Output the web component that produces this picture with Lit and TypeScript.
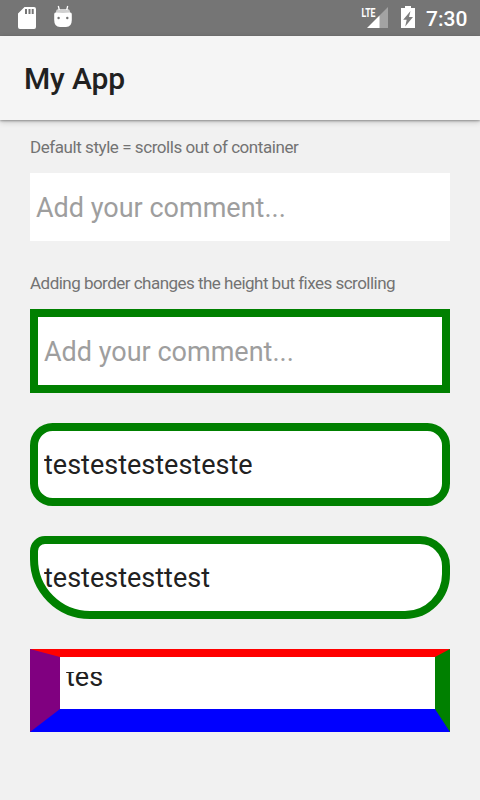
import { LitElement, html, css } from "lit";
import { customElement, property } from "lit/decorators.js";

@customElement("status-bar")
class StatusBar extends LitElement {
  static styles = css`
    :host { display: flex; align-items: center; height: 36px; background: #757575; color: #fff; box-sizing: border-box; }
    svg { display: block; flex: none; }
    .spacer { flex: 1; }
    .clock { width: 54px; box-sizing: border-box; padding-top: 2px; font: 500 21px/34px Roboto, sans-serif; }
    .lte { font: 700 13.5px Roboto, sans-serif; fill: #fff; }
  `;
  render() {
    return html`
      <svg width="84" height="36" viewBox="0 0 84 36">
        <path fill="#fff" fill-rule="evenodd" d="M24.5 7H34a2 2 0 0 1 2 2v18a2 2 0 0 1-2 2H20a2 2 0 0 1-2-2V13.500zM25 9v5h2v-5zM28.500 9v5h2v-5zM31.700 9v5h2v-5z"/>
        <path fill="#d0d0d0" d="M56 12q0-3 3-3h8q3 0 3 3v2H56z"/>
        <path d="M58.300 6l1 4M67.700 6l-1 4" stroke="#fff" stroke-width="1.300" fill="none"/>
        <path fill="#fff" d="M55.500 12.500q7.500 .8 15 0q1.300 0 1.300 2V20q0 7-5.800 7h-6q-5.800 0-5.800-7v-5.500q0-2 1.300-2z"/>
        <circle cx="58.600" cy="18" r="1.200" fill="#757575"/>
        <circle cx="67.300" cy="18" r="1.200" fill="#757575"/>
      </svg>
      <div class="spacer"></div>
      <svg width="66" height="36" viewBox="360 0 66 36">
        <path fill="#a3a3a3" d="M388 7v21h-9V16z"/>
        <path fill="#fff" d="M379.500 15.500V28H367z"/>
        <text class="lte" x="361.500" y="17" textLength="14" lengthAdjust="spacingAndGlyphs">LTE</text>
        <path fill="#fff" d="M405 6h6v2h4v20h-14V8h4z"/>
        <path fill="#7d7d7d" d="M410.500 11l-7.300 8.700h3.500l-1.500 6.800l7.800-9.500h-4z"/>
      </svg>
      <div class="clock">7:30</div>
    `;
  }
}

@customElement("comment-field")
class CommentField extends LitElement {
  @property() text = "";
  static styles = css`
    :host { display: block; box-sizing: border-box; background: #fff; overflow: hidden; font: 27px/32px Roboto, sans-serif; color: #212121; }
    .value { padding: var(--field-pad, 19px) 0 0 6px; white-space: nowrap; }
    .clip { overflow: hidden; height: var(--clip-height, auto); }
    .line { margin-top: var(--line-shift, 0); }
  `;
  render() {
    return html`<div class="value"><div class="clip"><div class="line">${this.text}</div></div></div>`;
  }
}

@customElement("app-root")
class AppRoot extends LitElement {
  static styles = css`
    :host { display: flex; flex-direction: column; height: 800px; background: #f1f1f1; font-family: Roboto, sans-serif; overflow: hidden; }
    .toolbar { height: 84px; background: #f5f5f5; box-shadow: 0 1px 2px rgba(0,0,0,.32), 0 2px 6px rgba(0,0,0,.18); padding-left: 24px; font-size: 30px; font-weight: 500; line-height: 85px; color: #212121; letter-spacing: -0.15px; }
    .content { padding: 17px 30px 0; display: flex; flex-direction: column; }
    .label { height: 20px; line-height: 21px; font-size: 17px; color: #737373; letter-spacing: -0.44px; white-space: nowrap; margin-bottom: 16px; }
    .tight { letter-spacing: -0.52px; }
    comment-field { height: 83px; margin-bottom: 30px; border: 8px solid #008000; --field-pad: 18px; }
    .plain { height: 68px; margin-bottom: 32px; border: 0; color: #9e9e9e; --field-pad: 19px; }
    .square { height: 84px; color: #9e9e9e; --field-pad: 19px; }
    .rounded { border-radius: 22.5px; }
    .uneven { border-radius: 15px 30px 45px 60px; }
    .colored { border-width: 8px 15px 23px 30px; border-color: #f00 #008000 #00f #800080; --field-pad: 15px; --clip-height: 22px; --line-shift: -11px; }
  `;
  render() {
    return html`
      <status-bar></status-bar>
      <div class="toolbar">My App</div>
      <div class="content">
        <div class="label">Default style = scrolls out of container</div>
        <comment-field class="plain" text="Add your comment..."></comment-field>
        <div class="label tight">Adding border changes the height but fixes scrolling</div>
        <comment-field class="square" text="Add your comment..."></comment-field>
        <comment-field class="rounded" text="testestestesteste"></comment-field>
        <comment-field class="uneven" text="testestesttest"></comment-field>
        <comment-field class="colored" text="tes"></comment-field>
      </div>
    `;
  }
}
